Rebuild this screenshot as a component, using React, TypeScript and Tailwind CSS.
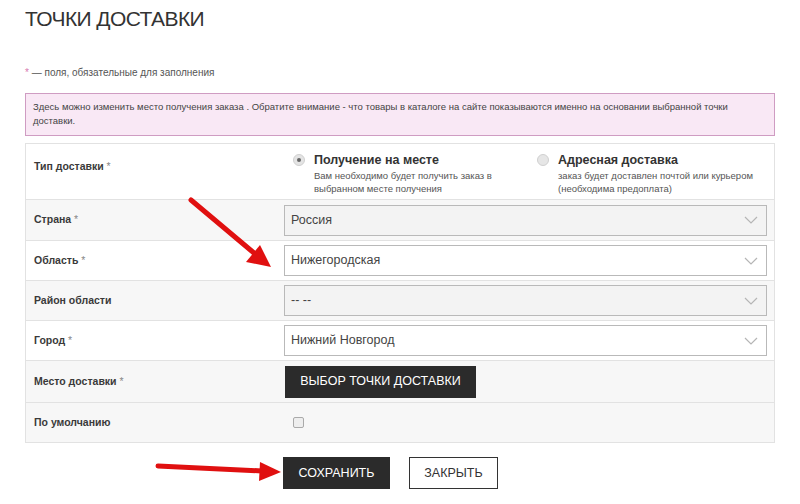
import React from "react";

const Chevron = () => (
  <svg width="14" height="8" viewBox="0 0 14 8" className="absolute right-[8px] top-1/2 -translate-y-1/2">
    <path d="M1 1 L7 7 L13 1" fill="none" stroke="#b5b5b5" strokeWidth="1.2" />
  </svg>
);

function Select({ value, gray }: { value: string; gray?: boolean }) {
  return (
    <div
      className={`relative h-[31px] w-[483px] border border-[#b9b9b9] flex items-center pl-[6px] text-[12.5px] text-[#444] ${
        gray ? "bg-[#f3f3f3]" : "bg-white"
      }`}
    >
      {value}
      <Chevron />
    </div>
  );
}

function Row({
  label,
  req,
  gray,
  h,
  children,
  top,
}: {
  label: string;
  req?: boolean;
  gray?: boolean;
  h: string;
  children?: React.ReactNode;
  top?: boolean;
}) {
  return (
    <div
      className={`grid grid-cols-[258px_1fr] border-t border-[#e2e2e2] ${h} ${gray ? "bg-[#f7f7f7]" : "bg-white"} ${
        top ? "items-start" : "items-center"
      }`}
    >
      <div className={`pl-[8px] text-[10.5px] font-bold text-[#3a3a3a] ${top ? "pt-[15px]" : ""}`}>
        {label}
        {req && <span className="font-normal text-[#888]"> *</span>}
      </div>
      <div className="flex items-center">{children}</div>
    </div>
  );
}

export default function App() {
  return (
    <div
      className="relative w-[800px] h-[504px] bg-white overflow-hidden"
      style={{ fontFamily: '"Liberation Sans", Arial, sans-serif' }}
    >
      <div className="pl-[25px] pr-[25px]">
        <h1 className="pt-[6px] text-[21px] leading-[26px] text-[#333] tracking-[-0.6px]">ТОЧКИ ДОСТАВКИ</h1>
        <div className="mt-[35px] text-[10px] leading-[12px] text-[#555]">
          <span className="text-[#d77ab0]">*</span> — поля, обязательные для заполнения
        </div>
        <div className="mt-[14px] h-[43px] border border-[#cf9cc2] bg-[#f9e8f5] px-[7px] pt-[6px] text-[9.5px] leading-[14px] text-[#444]">
          Здесь можно изменить место получения заказа . Обратите внимание - что товары в каталоге на сайте показываются именно на основании выбранной точки
          <br />
          доставки.
        </div>
        <div className="mt-[7px] border-x border-b border-[#e2e2e2]">
          <Row label="Тип доставки" req h="h-[56px]" top>
            <div className="flex pt-[9px]">
              <div className="flex w-[253px]">
                <div className="mt-[1px] ml-[9px] mr-[9px] w-[12px] h-[12px] rounded-full bg-[#e4e4e4] border border-[#d0d0d0] flex items-center justify-center">
                  <div className="w-[4px] h-[4px] rounded-full bg-[#666]" />
                </div>
                <div>
                  <div className="text-[12.5px] font-bold text-[#333] leading-[15px]">Получение на месте</div>
                  <div className="text-[9.5px] text-[#555] leading-[13px] mt-[1px]">
                    Вам необходимо будет получить заказ в
                    <br />
                    выбранном месте получения
                  </div>
                </div>
              </div>
              <div className="flex">
                <div className="mt-[1px] mr-[9px] w-[12px] h-[12px] rounded-full bg-[#e6e6e6] border border-[#d0d0d0]" />
                <div>
                  <div className="text-[12.5px] font-bold text-[#333] leading-[15px]">Адресная доставка</div>
                  <div className="text-[9.5px] text-[#555] leading-[13px] mt-[1px]">
                    заказ будет доставлен почтой или курьером
                    <br />
                    (необходима предоплата)
                  </div>
                </div>
              </div>
            </div>
          </Row>
          <Row label="Страна" req gray h="h-[41px]">
            <Select value="Россия" gray />
          </Row>
          <Row label="Область" req h="h-[40px]">
            <Select value="Нижегородская" />
          </Row>
          <Row label="Район области" gray h="h-[40px]">
            <Select value="-- --" gray />
          </Row>
          <Row label="Город" req h="h-[40px]">
            <Select value="Нижний Новгород" />
          </Row>
          <Row label="Место доставки" req gray h="h-[42px]">
            <div className="h-[32px] w-[191px] ml-[1px] bg-[#2b2b2b] text-white text-[12.5px] flex items-center justify-center">
              ВЫБОР ТОЧКИ ДОСТАВКИ
            </div>
          </Row>
          <Row label="По умолчанию" gray h="h-[40px]">
            <div className="ml-[9px] w-[11px] h-[11px] rounded-[2px] border border-[#aaa] bg-[#eee]" />
          </Row>
        </div>
        <div className="mt-[14px] flex pl-[258px] gap-[19px]">
          <div className="h-[32px] w-[107px] bg-[#2b2b2b] text-white text-[12.5px] flex items-center justify-center">
            СОХРАНИТЬ
          </div>
          <div className="h-[32px] w-[89px] border border-[#333] bg-white text-[#333] text-[12.5px] flex items-center justify-center">
            ЗАКРЫТЬ
          </div>
        </div>
      </div>
      <svg className="absolute left-0 top-0 pointer-events-none" width="800" height="504">
        <line x1="191" y1="200" x2="254" y2="253" stroke="#e01010" strokeWidth="5" strokeLinecap="round" />
        <polygon points="271,267 246,262 260,245" fill="#e01010" />
        <line x1="158" y1="466" x2="262" y2="471" stroke="#e01010" strokeWidth="5" strokeLinecap="round" />
        <polygon points="281,472 260,462 259,481" fill="#e01010" />
      </svg>
    </div>
  );
}
